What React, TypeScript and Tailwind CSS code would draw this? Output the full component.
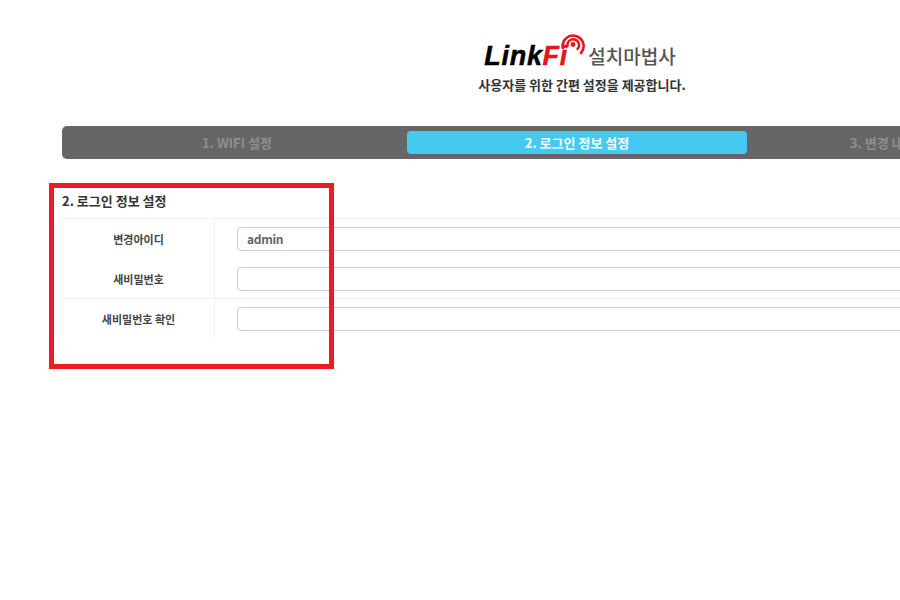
const inputClass = "block h-6 w-full rounded-[4px] border border-[#cccccc] bg-white px-[9px] pb-[2px] text-[12px] tracking-[-0.3px] font-semibold text-[#666666] outline-none";

const thClass = "w-[152px] shrink-0 border-r border-[#f2f2f2] flex items-center justify-center pt-[1px] text-[11px] font-bold text-[#444444]";

function Logo() {
  return (
    <div className="flex justify-center pr-[4px]">
      <div className="relative h-[36px] w-[104px]">
        <span className="absolute left-0 top-[8px] text-[27px] leading-[30px] font-bold italic tracking-[0.7px] text-black [-webkit-text-stroke:0.5px] font-['Liberation_Sans',sans-serif]">
          Link<span className="text-[#e8141c]">Fi</span>
        </span>
        <svg className="absolute left-[77px] top-0" width="24" height="26" viewBox="0 0 24 26" fill="none">
          <path d="M1.8 15A10.5 10.5 0 1 1 20 20" stroke="#e8141c" strokeWidth="2.6" strokeLinecap="round" />
          <path d="M6.5 13A5.8 5.8 0 1 1 16.5 16" stroke="#e8141c" strokeWidth="2.4" strokeLinecap="round" />
          <circle cx="12" cy="11.5" r="2.4" fill="#e8141c" />
        </svg>
      </div>
      <span className="pt-[10px] text-[19px] leading-[26px] font-medium text-[#555555]">설치마법사</span>
    </div>
  );
}

export default function App() {
  return (
    <div className="relative h-[600px] w-[900px] overflow-hidden bg-white font-['Noto_Sans_CJK_KR','Noto_Sans',sans-serif]">
      <div className="ml-[62px] w-[1040px] pt-[33px]">
        <Logo />
        <p className="mt-[6px] text-center text-[13px] leading-[20px] font-bold text-[#333333]">사용자를 위한 간편 설정을 제공합니다.</p>

        <div className="mt-[31px] flex h-[33px] rounded-[5px] bg-[#666666] p-[5px] text-[13px] font-bold text-[#8f8f8f]">
          <div className="flex w-[340px] items-center justify-center">1. WIFI 설정</div>
          <div className="flex w-[340px] items-center justify-center rounded-[4px] bg-[#45c9f1] text-white">2. 로그인 정보 설정</div>
          <div className="flex w-[340px] items-center justify-center">3. 변경 내용 확인 및 적용</div>
        </div>

        <h2 className="mt-[32px] text-[13px] leading-[20px] font-bold text-[#333333]">2. 로그인 정보 설정</h2>

        <div className="mt-[7px] border-t border-l border-[#f2f2f2]">
          <div className="flex h-10">
            <div className={thClass}>변경아이디</div>
            <div className="flex flex-1 items-center pl-[22px]">
              <input className={inputClass} defaultValue="admin" />
            </div>
          </div>
          <div className="flex h-10 border-b border-[#f2f2f2]">
            <div className={thClass}>새비밀번호</div>
            <div className="flex flex-1 items-center pl-[22px]">
              <input className={inputClass} type="password" />
            </div>
          </div>
          <div className="flex h-10">
            <div className={thClass}>새비밀번호 확인</div>
            <div className="flex flex-1 items-center pl-[22px]">
              <input className={inputClass} type="password" />
            </div>
          </div>
        </div>
      </div>

      <div className="absolute left-[49px] top-[183px] h-[186px] w-[285px] border-[5px] border-[#ed1c24]" />
    </div>
  );
}
